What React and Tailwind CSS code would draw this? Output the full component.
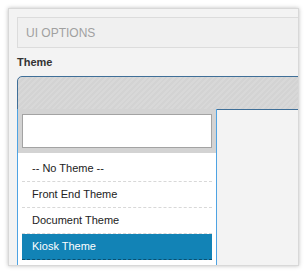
export default function App() {
  const items = ["-- No Theme --", "Front End Theme", "Document Theme", "Kiosk Theme"];
  return (
    <div className="w-[307px] h-[274px] bg-white pt-[8px] pl-[8px] overflow-hidden" style={{ fontFamily: '"Liberation Sans", Arial, sans-serif' }}>
      <div className="w-[291px] h-[258px] bg-[#f3f3f3] border border-[#d8d8d8] shadow-[0_0_4px_rgba(0,0,0,0.25)] overflow-hidden">
        <div className="w-[320px] pl-[8px] pt-[8px]">
          <div className="h-[31px] border border-[#dcdcdc] bg-[#f0f0f0] flex items-center pl-[8px] text-[12px] text-[#a0a0a0]">
            UI OPTIONS
          </div>
          <div className="mt-[7px] text-[11px] font-bold text-[#333] leading-[14px]">Theme</div>
          <div className="mt-[7px] h-[34px] rounded-t-[5px] border border-[#3f6f98] bg-[repeating-linear-gradient(135deg,#d3d3d3_0px,#d3d3d3_2px,#d8d8d8_2px,#d8d8d8_4px)]"></div>
          <div className="-mt-px w-[200px] h-[157px] bg-white border border-[#4ea3e3] border-t-0">
            <div className="bg-[#d3d3d3] px-[4px] pt-[5px] pb-[5px]">
              <div className="h-[34px] bg-white border border-[#a3a3a3]"></div>
            </div>
            <div className="px-[4px] pt-[3px]">
              {items.map((t, i) => (
                <div
                  key={t}
                  className={
                    i === 3
                      ? "h-[26px] flex items-center pl-[10px] text-[11px] bg-[#1283b6] text-white border-b border-dashed border-[#0c4f70]"
                      : "h-[26px] flex items-center pl-[10px] text-[11px] text-[#222] border-b border-dashed border-[#d8d8d8]"
                  }
                >
                  {t}
                </div>
              ))}
            </div>
          </div>
        </div>
      </div>
    </div>
  );
}
